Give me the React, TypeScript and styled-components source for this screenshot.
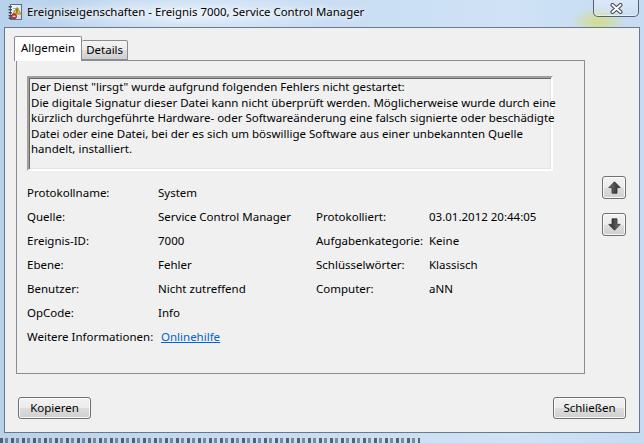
import React from "react";
import styled, { createGlobalStyle } from "styled-components";

const UI_FONT = `"Segoe UI", "Noto Sans", "Open Sans", sans-serif`;

const Global = createGlobalStyle`
  html, body {
    margin: 0;
    padding: 0;
  }
  body {
    width: 644px;
    height: 443px;
    overflow: hidden;
    background: #c4d9ef;
  }
`;

/* ---------- window frame ---------- */

const Window = styled.div`
  width: 644px;
  height: 443px;
  display: flex;
  flex-direction: column;
  overflow: hidden;
  font-family: ${UI_FONT};
  font-size: 11.5px;
  color: #000;
  background:
    radial-gradient(ellipse 40px 22px at 598px 22px, rgba(214, 220, 120, 0.85), rgba(214, 220, 120, 0) 70%),
    radial-gradient(ellipse 220px 30px at 190px 14px, rgba(236, 244, 252, 0.9), rgba(236, 244, 252, 0) 70%),
    linear-gradient(90deg, #b9d2ec 0%, #c7dcf2 40%, #cfe2f6 80%, #c5dbf2 100%);
`;

const TitleBar = styled.div`
  height: 27px;
  flex: none;
  display: flex;
  align-items: flex-start;
  padding-left: 7px;
`;

const TitleIcon = styled.svg`
  width: 16px;
  height: 16px;
  margin-top: 4px;
  flex: none;
`;

const TitleText = styled.div`
  margin: 4px 0 0 4px;
  line-height: 16px;
  font-size: 11.4px;
  white-space: nowrap;
  text-shadow: 0 0 6px rgba(255, 255, 255, 0.95), 0 0 10px rgba(255, 255, 255, 0.8);
`;

const CloseButton = styled.div`
  margin-left: auto;
  margin-right: 5px;
  width: 46px;
  height: 17px;
  box-sizing: border-box;
  border: 1px solid rgba(40, 52, 72, 0.75);
  border-top: none;
  border-radius: 0 0 5px 5px;
  background: linear-gradient(180deg, rgba(255, 255, 255, 0.35), rgba(255, 255, 255, 0.1));
  box-shadow: inset 0 -1px 0 rgba(255, 255, 255, 0.5);
  display: flex;
  align-items: center;
  justify-content: center;
`;

const Client = styled.div`
  margin: 0 4px;
  height: 406px;
  box-sizing: border-box;
  border: 1px solid rgba(62, 80, 108, 0.75);
  background: #f0f0f0;
  display: flex;
  flex-direction: column;
  padding: 8px 13px 0 9px;
  flex: none;
`;

const BottomFrame = styled.div`
  flex: 1;
  display: flex;
  flex-direction: column;
`;

const FrameEdge = styled.div`
  height: 5px;
`;

/* the desktop showing through below the window edge */
const Backdrop = styled.div`
  flex: 1;
  width: 420px;
  background: repeating-linear-gradient(
    90deg,
    rgba(50, 55, 65, 0.75) 0 3px,
    transparent 3px 5px,
    rgba(50, 55, 65, 0.5) 5px 8px,
    transparent 8px 11px
  );
`;

/* ---------- tabs ---------- */

const Body = styled.div`
  display: flex;
  align-items: flex-start;
`;

const TabArea = styled.div`
  width: 571px;
  display: flex;
  flex-direction: column;
`;

const TabStrip = styled.div`
  height: 24px;
  display: flex;
  align-items: flex-end;
  position: relative;
  z-index: 1;
`;

const Tab = styled.div<{ $active?: boolean }>`
  box-sizing: border-box;
  height: ${(p) => (p.$active ? "25px" : "20px")};
  margin-bottom: ${(p) => (p.$active ? "-1px" : "0")};
  padding: ${(p) => (p.$active ? "3px 6px 0 6px" : "1px 4px 0 4px")};
  border: 1px solid #898c95;
  border-bottom: ${(p) => (p.$active ? "none" : "1px solid #898c95")};
  border-left: ${(p) => (p.$active ? "1px solid #898c95" : "none")};
  border-radius: 2px 2px 0 0;
  background: ${(p) =>
    p.$active ? "#ffffff" : "linear-gradient(180deg, #f3f3f3 0%, #ebebeb 50%, #dddddd 51%, #cfcfcf 100%)"};
  line-height: 16px;
  white-space: nowrap;
`;

const Panel = styled.div`
  margin-left: 2px;
  width: 569px;
  height: 314px;
  box-sizing: border-box;
  border: 1px solid #898c95;
  background: #f0f0f0;
  padding: 15px 0 0 10px;
  display: flex;
  flex-direction: column;
`;

const MessageBox = styled.div`
  width: 526px;
  height: 95px;
  box-sizing: border-box;
  border-style: solid;
  border-width: 2px;
  border-color: #a0a0a0 #ffffff #ffffff #a0a0a0;
  box-shadow: inset 1px 1px 0 #696969, inset -1px -1px 0 #e3e3e3;
  padding: 1px 2px;
  line-height: 15.5px;
`;

const MessageLine = styled.div`
  white-space: nowrap;
`;

const DetailGrid = styled.div`
  margin-top: 14px;
  display: grid;
  grid-template-columns: 131px 158px 113px 1fr;
  grid-auto-rows: 24px;
  line-height: 16px;
`;

const Cell = styled.div<{ $span?: number }>`
  white-space: nowrap;
  grid-column: span ${(p) => p.$span ?? 1};
`;

const Link = styled.a`
  color: #0066cc;
  text-decoration: underline;
  margin-left: 3px;
  cursor: pointer;
`;

/* ---------- side arrows & buttons ---------- */

const SideColumn = styled.div`
  margin-left: 17px;
  padding-top: 140px;
  display: flex;
  flex-direction: column;
  gap: 14px;
`;

const buttonFace = `
  box-sizing: border-box;
  border: 1px solid #707070;
  border-radius: 3px;
  background: linear-gradient(180deg, #f2f2f2 0%, #ebebeb 50%, #dddddd 51%, #cfcfcf 100%);
  box-shadow: inset 0 0 0 1px rgba(255, 255, 255, 0.8);
`;

const ArrowButton = styled.div`
  ${buttonFace}
  width: 24px;
  height: 23px;
  display: flex;
  align-items: center;
  justify-content: center;
`;

const ButtonRow = styled.div`
  margin-top: 23px;
  padding-left: 4px;
  display: flex;
  justify-content: space-between;
`;

const PushButton = styled.div`
  ${buttonFace}
  width: 73px;
  height: 22px;
  display: flex;
  align-items: center;
  justify-content: center;
  line-height: 16px;
`;

/* ---------- drawings ---------- */

const EventLogIcon = () => (
  <TitleIcon viewBox="0 0 16 16">
    <defs>
      <linearGradient id="page" x1="0" y1="0" x2="1" y2="1">
        <stop offset="0" stopColor="#ffffff" />
        <stop offset="1" stopColor="#c9d7ea" />
      </linearGradient>
    </defs>
    <rect x="3.5" y="0.5" width="11" height="15" fill="url(#page)" stroke="#5d6f8f" />
    <path d="M6 4.5h6M6 7h6M6 9.5h6" stroke="#9fb0c8" strokeWidth="1" />
    {[2.5, 5.5, 8.5, 11.5, 14].map((y) => (
      <rect key={y} x="1.5" y={y - 0.5} width="3.5" height="1.4" rx="0.6" fill="#3f4652" />
    ))}
    <path d="M10 3.5 L14 10 L6 10 Z" fill="#f6c840" stroke="#a27808" strokeWidth="0.8" strokeLinejoin="round" />
    <path d="M10 5.3v2.4" stroke="#3a2c00" strokeWidth="1.1" />
    <rect x="9.45" y="8.3" width="1.1" height="1" fill="#3a2c00" />
    <circle cx="7" cy="12.3" r="2.6" fill="#d23a30" stroke="#8d1b14" strokeWidth="0.7" />
    <rect x="5.6" y="11.8" width="2.8" height="1" fill="#ffffff" />
  </TitleIcon>
);

const CloseGlyph = () => (
  <svg width="13" height="11" viewBox="0 0 13 11">
    <path d="M2.5 2 L10.5 9 M10.5 2 L2.5 9" stroke="#3d4654" strokeWidth="4" strokeLinecap="round" />
    <path d="M2.5 2 L10.5 9 M10.5 2 L2.5 9" stroke="#ffffff" strokeWidth="2" strokeLinecap="round" />
  </svg>
);

const Arrow = ({ down }: { down?: boolean }) => (
  <svg width="13" height="13" viewBox="0 0 13 13" style={down ? { transform: "rotate(180deg)" } : undefined}>
    <defs>
      <linearGradient id={down ? "arrDown" : "arrUp"} x1="0" y1="0" x2="1" y2="0">
        <stop offset="0" stopColor="#8a8a8a" />
        <stop offset="0.5" stopColor="#4a4a4a" />
        <stop offset="1" stopColor="#3a3a3a" />
      </linearGradient>
    </defs>
    <path
      d="M6.5 0.8 L12.2 6.6 L9 6.6 L9 12.2 L4 12.2 L4 6.6 L0.8 6.6 Z"
      fill={`url(#${down ? "arrDown" : "arrUp"})`}
      stroke="#2f2f2f"
      strokeWidth="0.8"
      strokeLinejoin="round"
    />
  </svg>
);

/* ---------- content ---------- */

const message = [
  'Der Dienst "lirsgt" wurde aufgrund folgenden Fehlers nicht gestartet:',
  "Die digitale Signatur dieser Datei kann nicht überprüft werden. Möglicherweise wurde durch eine",
  "kürzlich durchgeführte Hardware- oder Softwareänderung eine falsch signierte oder beschädigte",
  "Datei oder eine Datei, bei der es sich um böswillige Software aus einer unbekannten Quelle",
  "handelt, installiert.",
];

const details: [string, string, string?, string?][] = [
  ["Protokollname:", "System"],
  ["Quelle:", "Service Control Manager", "Protokolliert:", "03.01.2012 20:44:05"],
  ["Ereignis-ID:", "7000", "Aufgabenkategorie:", "Keine"],
  ["Ebene:", "Fehler", "Schlüsselwörter:", "Klassisch"],
  ["Benutzer:", "Nicht zutreffend", "Computer:", "aNN"],
  ["OpCode:", "Info"],
];

export default function App() {
  return (
    <>
      <Global />
      <Window>
        <TitleBar>
          <EventLogIcon />
          <TitleText>Ereigniseigenschaften - Ereignis 7000, Service Control Manager</TitleText>
          <CloseButton>
            <CloseGlyph />
          </CloseButton>
        </TitleBar>

        <Client>
          <Body>
            <TabArea>
              <TabStrip>
                <Tab $active>Allgemein</Tab>
                <Tab>Details</Tab>
              </TabStrip>
              <Panel>
                <MessageBox>
                  {message.map((line) => (
                    <MessageLine key={line}>{line}</MessageLine>
                  ))}
                </MessageBox>
                <DetailGrid>
                  {details.map(([l1, v1, l2, v2]) => (
                    <React.Fragment key={l1}>
                      <Cell>{l1}</Cell>
                      <Cell>{v1}</Cell>
                      {l2 ? (
                        <>
                          <Cell>{l2}</Cell>
                          <Cell>{v2}</Cell>
                        </>
                      ) : (
                        <Cell $span={2} />
                      )}
                    </React.Fragment>
                  ))}
                  <Cell>Weitere Informationen:</Cell>
                  <Cell $span={3}>
                    <Link>Onlinehilfe</Link>
                  </Cell>
                </DetailGrid>
              </Panel>
            </TabArea>
            <SideColumn>
              <ArrowButton>
                <Arrow />
              </ArrowButton>
              <ArrowButton>
                <Arrow down />
              </ArrowButton>
            </SideColumn>
          </Body>
          <ButtonRow>
            <PushButton>Kopieren</PushButton>
            <PushButton>Schließen</PushButton>
          </ButtonRow>
        </Client>

        <BottomFrame>
          <FrameEdge />
          <Backdrop />
        </BottomFrame>
      </Window>
    </>
  );
}
